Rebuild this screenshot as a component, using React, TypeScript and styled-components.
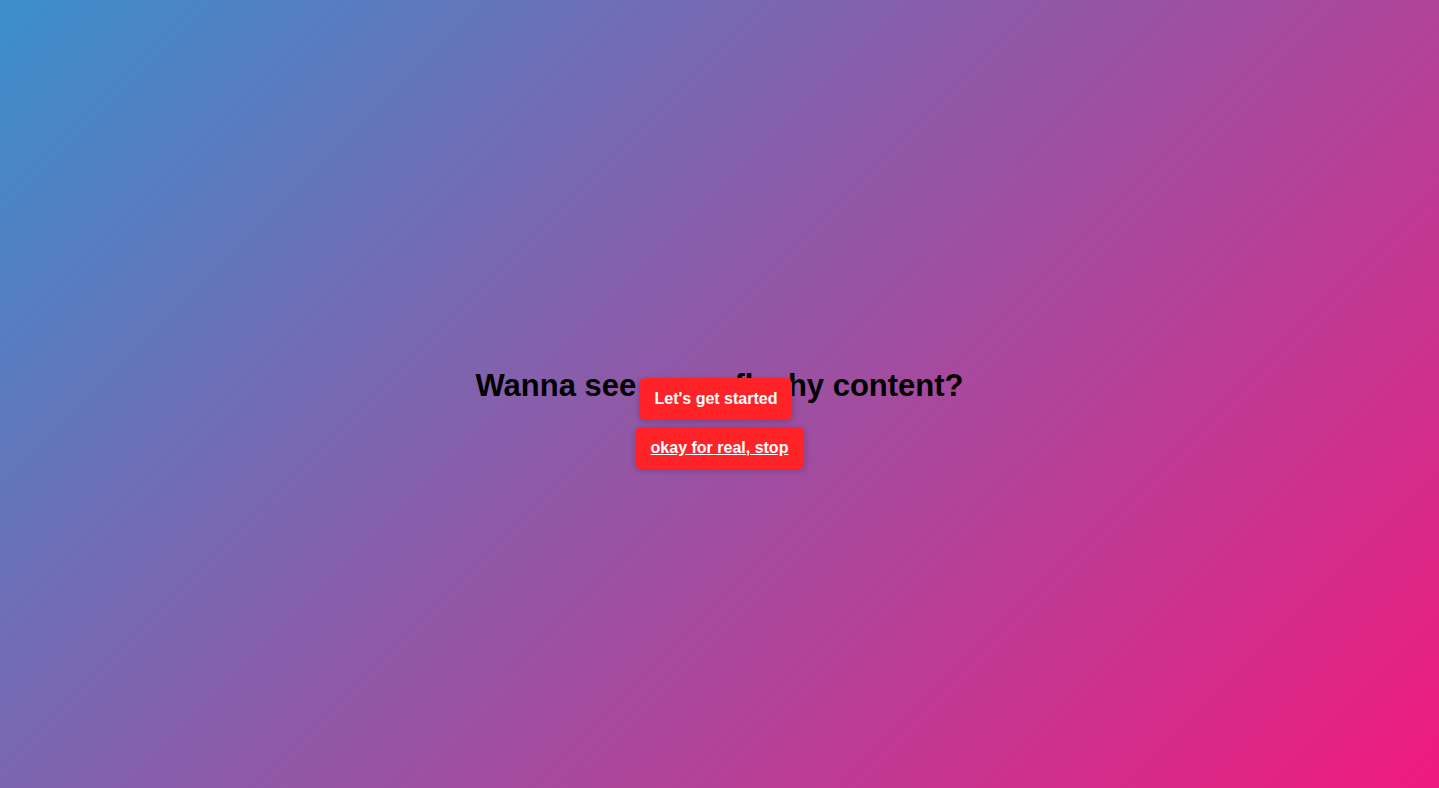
import React from "react";
import styled, { createGlobalStyle } from "styled-components";

const Global = createGlobalStyle`
  html, body { margin: 0; padding: 0; height: 100%; }
  body {
    font-family: "Liberation Sans", Arial, sans-serif;
    background: linear-gradient(135deg, #3b8fcc 0%, #f01a7e 100%);
    min-height: 100vh;
  }
`;

const Page = styled.main`
  position: relative;
  width: 100%;
  height: 100vh;
  display: flex;
  align-items: center;
  justify-content: center;
  padding-bottom: 16px;
  box-sizing: border-box;
`;

const Heading = styled.h1`
  margin: 0;
  font-size: 31px;
  font-weight: 700;
  color: #000;
`;

const ButtonStack = styled.div`
  position: absolute;
  left: 50%;
  top: calc(50% - 16px);
  transform: translateX(-50%);
  display: flex;
  flex-direction: column;
  align-items: center;
  gap: 7px;
`;

const ActionButton = styled.button<{ $offset?: number; $link?: boolean; $pad?: number }>`
  box-sizing: border-box;
  height: 42px;
  padding: 0 ${(p) => p.$pad ?? 16}px;
  margin-right: ${(p) => p.$offset ?? 0}px;
  border: none;
  border-radius: 6px;
  background: #ff2328;
  color: #fff;
  font-family: "Liberation Sans", Arial, sans-serif;
  font-size: 16px;
  font-weight: 700;
  text-decoration: ${(p) => (p.$link ? "underline" : "none")};
  box-shadow: 0 2px 6px rgba(0, 0, 0, 0.18);
  cursor: pointer;
`;

export default function App() {
  return (
    <>
      <Global />
      <Page>
        <Heading>Wanna see some flashy content?</Heading>
        <ButtonStack>
          <ActionButton $offset={7} $pad={15}>Let's get started</ActionButton>
          <ActionButton $link>okay for real, stop</ActionButton>
        </ButtonStack>
      </Page>
    </>
  );
}
